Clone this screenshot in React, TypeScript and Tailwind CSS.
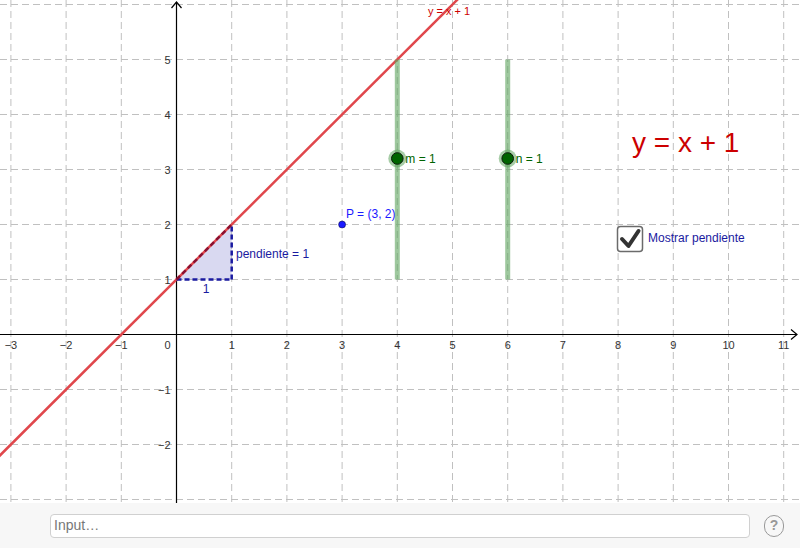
import React from 'react';

const OX = 176.5;
const OY = 334.5;
const UX = 55.2;
const UY = 55;

const px = (x: number) => OX + x * UX;
const py = (y: number) => OY - y * UY;

const xs = [-3, -2, -1, 1, 2, 3, 4, 5, 6, 7, 8, 9, 10, 11];
const ys = [-3, -2, -1, 1, 2, 3, 4, 5, 6];

const fmt = (n: number) => (n < 0 ? `\u2212${-n}` : `${n}`);

const Graph: React.FC = () => {
  const lineX1 = -3.25;
  const lineX2 = 5.2;
  return (
    <svg width={800} height={503} className="block" style={{ fontFamily: '"Liberation Sans", Arial, sans-serif' }}>
      {/* grid */}
      <g stroke="#c0c0c0" strokeWidth={1} strokeDasharray="7 4">
        {xs.map((k) => (
          <line key={`vx${k}`} x1={px(k)} y1={0} x2={px(k)} y2={503} />
        ))}
        {ys.map((k) => (
          <line key={`hy${k}`} x1={0} y1={py(k)} x2={800} y2={py(k)} />
        ))}
      </g>

      {/* axes */}
      <g stroke="#000" strokeWidth={1.2} fill="none">
        <line x1={0} y1={OY} x2={797} y2={OY} />
        <polyline points={`791,${OY - 5} 797,${OY} 791,${OY + 5}`} />
        <line x1={OX} y1={2} x2={OX} y2={503} />
        <polyline points={`${OX - 5},8 ${OX},2 ${OX + 5},8`} />
      </g>

      {/* tick labels */}
      <g fontSize={11} fill="#333">
        {xs.map((k) => (
          <text key={`tx${k}`} x={px(k)} y={OY + 14} textAnchor="middle">
            {fmt(k)}
          </text>
        ))}
        {ys
          .filter((k) => k !== 6 && k !== -3)
          .map((k) => (
            <text key={`ty${k}`} x={OX - 6} y={py(k) + 4} textAnchor="end">
              {fmt(k)}
            </text>
          ))}
        <text x={OX - 6} y={OY + 14} textAnchor="end">
          0
        </text>
      </g>

      {/* slope triangle */}
      <polygon
        points={`${px(0)},${py(1)} ${px(1)},${py(1)} ${px(1)},${py(2)}`}
        fill="#5050c0"
        fillOpacity={0.22}
        stroke="none"
      />

      {/* line y = x + 1 */}
      <line
        x1={px(lineX1)}
        y1={py(lineX1 + 1)}
        x2={px(lineX2)}
        y2={py(lineX2 + 1)}
        stroke="#e0474c"
        strokeWidth={2.5}
      />

      <g stroke="#1a1aa0" strokeWidth={2.5} strokeDasharray="5 3" fill="none">
        <line x1={px(0)} y1={py(1)} x2={px(1)} y2={py(1)} />
        <line x1={px(1)} y1={py(1)} x2={px(1)} y2={py(2)} />
      </g>
      <line
        x1={px(0)}
        y1={py(1)}
        x2={px(1)}
        y2={py(2)}
        stroke="#8a1030"
        strokeWidth={2.5}
        strokeDasharray="5 3"
      />

      <text x={236} y={258} fontSize={12} fill="#1a1aa0">
        pendiente = 1
      </text>
      <text x={206} y={293} fontSize={12} fill="#1a1aa0" textAnchor="middle">
        1
      </text>

      {/* point P */}
      <circle cx={px(3)} cy={py(2)} r={3.5} fill="#1a1aff" stroke="#000033" strokeWidth={0.5} />
      <text x={346} y={218} fontSize={12} fill="#1a1aff">
        P = (3, 2)
      </text>

      {/* sliders */}
      {[
        { x: 4, label: 'm = 1' },
        { x: 6, label: 'n = 1' },
      ].map((s) => (
        <g key={s.label}>
          <line
            x1={px(s.x)}
            y1={py(5)}
            x2={px(s.x)}
            y2={py(1)}
            stroke="#5ea45e"
            strokeOpacity={0.6}
            strokeWidth={5}
          />
          <circle cx={px(s.x)} cy={158.5} r={9} fill="#5ea45e" fillOpacity={0.55} />
          <circle cx={px(s.x)} cy={158.5} r={5.8} fill="#006400" stroke="#0a1a0a" strokeWidth={1} />
          <text x={px(s.x) + 8} y={162.5} fontSize={12} fill="#006400">
            {s.label}
          </text>
        </g>
      ))}

      {/* equation labels */}
      <text x={428} y={15} fontSize={11} fill="#cc0000">
        y = x + 1
      </text>
      <text x={632} y={152} fontSize={28} fill="#cc0000">
        y = x + 1
      </text>

      {/* checkbox */}
      <rect x={617.5} y={226.5} width={25} height={25} rx={3} fill="#fff" stroke="#6b6b6b" strokeWidth={1.5} />
      <polyline
        points="622,239 628.5,246 638.5,231"
        fill="none"
        stroke="#333"
        strokeWidth={4}
        strokeLinecap="round"
        strokeLinejoin="round"
      />
      <text x={648} y={242} fontSize={12} fill="#1a1aa0">
        Mostrar pendiente
      </text>
    </svg>
  );
};

export default function App() {
  return (
    <div className="w-[800px] h-[548px] bg-white overflow-hidden flex flex-col" style={{ fontFamily: '"Liberation Sans", Arial, sans-serif' }}>
      <Graph />
      <div className="flex-1 bg-[#f7f7f7] flex items-center pl-[50px] pr-[16px] gap-[14px]">
        <div className="flex-1 h-[24px] bg-white border border-[#d0d0d0] rounded-[4px] flex items-center px-[3px] text-[14px] text-[#777]">
          Input…
        </div>
        <div className="w-[20px] h-[22px] rounded-full border-[1.5px] border-[#999] flex items-center justify-center text-[14px] font-bold text-[#999]">
          ?
        </div>
      </div>
    </div>
  );
}
